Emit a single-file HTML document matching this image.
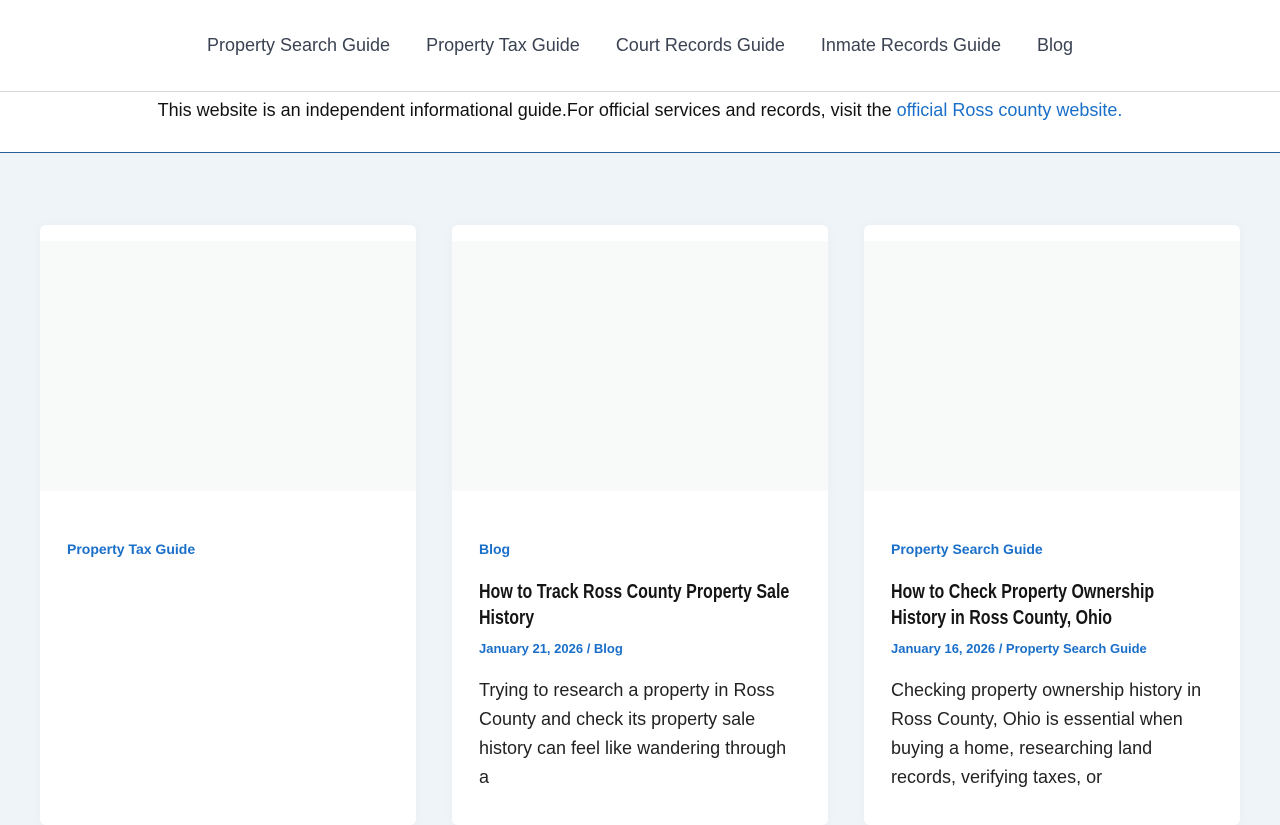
<!DOCTYPE html>
<html><head><meta charset="utf-8"><style>
*{margin:0;padding:0;box-sizing:border-box}
body{width:1280px;height:800px;overflow:hidden;background:#eff4f8;font-family:"Liberation Sans",Arial,sans-serif}
.hdr{height:92px;background:#fff;border-bottom:1px solid #d8d8d8;display:flex;justify-content:center;align-items:center;gap:36px;padding-bottom:0}
.hdr a{font-size:18px;color:#3a4252;text-decoration:none}
.note{height:61px;background:#fff;border-bottom:1px solid #2a5f96;text-align:center;font-size:18px;color:#111;padding-top:8px}
.note a{color:#1a6fc9;text-decoration:none}
.card{position:absolute;top:225px;width:376px;height:600px;background:#fff;border-radius:6px;box-shadow:0 0 12px rgba(0,0,0,0.03)}
.img{position:absolute;top:16px;left:0;right:0;height:250px;background:#f8f9f9}
.cat{position:absolute;left:27px;top:316px;font-size:14px;font-weight:bold;color:#1a6fc9}
.t{position:absolute;left:27px;top:354px;width:400px;transform:scaleX(0.8);transform-origin:left top;font-weight:bold;font-size:20px;line-height:26px;color:#151515}
.m{position:absolute;left:27px;top:416px;font-size:13px;font-weight:bold;color:#1a6fc9}
.e{position:absolute;left:27px;top:451px;width:318px;font-size:18px;line-height:29px;color:#222}
</style></head><body>
<div class="hdr"><a>Property Search Guide</a><a>Property Tax Guide</a><a>Court Records Guide</a><a>Inmate Records Guide</a><a>Blog</a></div>
<div class="note">This website is an independent informational guide.For official services and records, visit the <a>official Ross county website.</a></div>
<div class="card" style="left:40px"><div class="img"></div><div class="cat">Property Tax Guide</div></div>
<div class="card" style="left:452px"><div class="img"></div><div class="cat">Blog</div>
<div class="t">How to Track Ross County Property Sale<br>History</div>
<div class="m">January 21, 2026 / Blog</div>
<div class="e">Trying to research a property in Ross County and check its property sale history can feel like wandering through a</div></div>
<div class="card" style="left:864px"><div class="img"></div><div class="cat">Property Search Guide</div>
<div class="t">How to Check Property Ownership<br>History in Ross County, Ohio</div>
<div class="m">January 16, 2026 / Property Search Guide</div>
<div class="e">Checking property ownership history in Ross County, Ohio is essential when buying a home, researching land records, verifying taxes, or</div></div>
</body></html>
